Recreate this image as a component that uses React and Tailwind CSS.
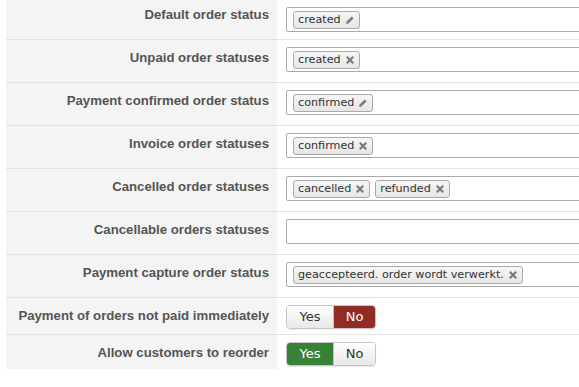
import React from 'react';

const rows = [
  { label: 'Default order status', chips: [{ text: 'created', icon: 'edit' }] },
  { label: 'Unpaid order statuses', chips: [{ text: 'created', icon: 'x' }] },
  { label: 'Payment confirmed order status', chips: [{ text: 'confirmed', icon: 'edit' }] },
  { label: 'Invoice order statuses', chips: [{ text: 'confirmed', icon: 'x' }] },
  {
    label: 'Cancelled order statuses',
    chips: [
      { text: 'cancelled', icon: 'x' },
      { text: 'refunded', icon: 'x' },
    ],
  },
  { label: 'Cancellable orders statuses', chips: [] },
  { label: 'Payment capture order status', chips: [{ text: 'geaccepteerd. order wordt verwerkt.', icon: 'x' }] },
];

function PencilIcon() {
  return (
    <svg width="10" height="10" viewBox="0 0 10 10" className="ml-[4px]">
      <path d="M1 9 L1.6 6.6 L6.8 1.4 L8.6 3.2 L3.4 8.4 Z" fill="#7a7a7a" />
    </svg>
  );
}

function CloseIcon() {
  return (
    <svg width="10" height="10" viewBox="0 0 10 10" className="ml-[4px]">
      <path d="M1.8 1.8 L8.2 8.2 M8.2 1.8 L1.8 8.2" stroke="#7a7a7a" strokeWidth="2.1" />
    </svg>
  );
}

function Chip({ text, icon }) {
  return (
    <div className="flex items-center h-[18px] px-[4px] mr-[5px] border border-[#aaaaaa] rounded-[3px] bg-gradient-to-b from-[#f6f6f6] to-[#e6e6e6] text-[11.2px] text-[#333] leading-none">
      <span>{text}</span>
      {icon === 'edit' ? <PencilIcon /> : <CloseIcon />}
    </div>
  );
}

function Toggle({ value }) {
  const base = 'h-full flex items-center justify-center text-[13px]';
  return (
    <div className="flex h-[24px] rounded-[4px] border border-[#c4c4c4] overflow-hidden shadow-[0_1px_1px_rgba(0,0,0,0.08)]">
      <div
        className={`${base} w-[46px] ${
          value === 'yes' ? 'bg-[#378237] text-white' : 'bg-gradient-to-b from-white to-[#e8e8e8] text-[#333]'
        }`}
      >
        Yes
      </div>
      <div
        className={`${base} w-[42px] border-l border-[#c4c4c4] ${
          value === 'no' ? 'bg-[#942a25] text-white' : 'bg-gradient-to-b from-white to-[#e8e8e8] text-[#333]'
        }`}
      >
        No
      </div>
    </div>
  );
}

const labelCls =
  "w-[271px] shrink-0 bg-[#f4f4f4] text-right pr-[8px] text-[13.2px] leading-[18px] font-bold text-[#555] font-['Liberation_Sans',Arial,sans-serif]";

export default function App() {
  return (
    <div className="w-[579px] h-[387px] overflow-hidden bg-white font-['DejaVu_Sans',Verdana,sans-serif]">
      <div className="w-[680px] ml-[6px]">
        {rows.map((row, i) => (
          <div
            key={row.label}
            className={`flex border-b border-[#e2e2e2] ${i === 0 ? 'h-[40px]' : 'h-[43px]'}`}
          >
            <div className={`${labelCls} ${i === 0 ? 'pt-[6px]' : 'pt-[9px]'}`}>{row.label}</div>
            <div className="pl-[9px] flex-1 pt-[7px]">
              <div className="h-[25px] w-[400px] border border-[#aaaaaa] rounded-[2px] bg-white flex items-center pl-[6px]">
                {row.chips.map((c) => (
                  <Chip key={c.text} text={c.text} icon={c.icon} />
                ))}
              </div>
            </div>
          </div>
        ))}
        <div className="flex h-[37px] border-b border-[#e2e2e2]">
          <div className={`${labelCls} pt-[9px]`}>Payment of orders not paid immediately</div>
          <div className="pl-[9px] pt-[7px]">
            <Toggle value="no" />
          </div>
        </div>
        <div className="flex h-[34px]">
          <div className={`${labelCls} pt-[9px]`}>Allow customers to reorder</div>
          <div className="pl-[9px] pt-[7px]">
            <Toggle value="yes" />
          </div>
        </div>
      </div>
    </div>
  );
}
